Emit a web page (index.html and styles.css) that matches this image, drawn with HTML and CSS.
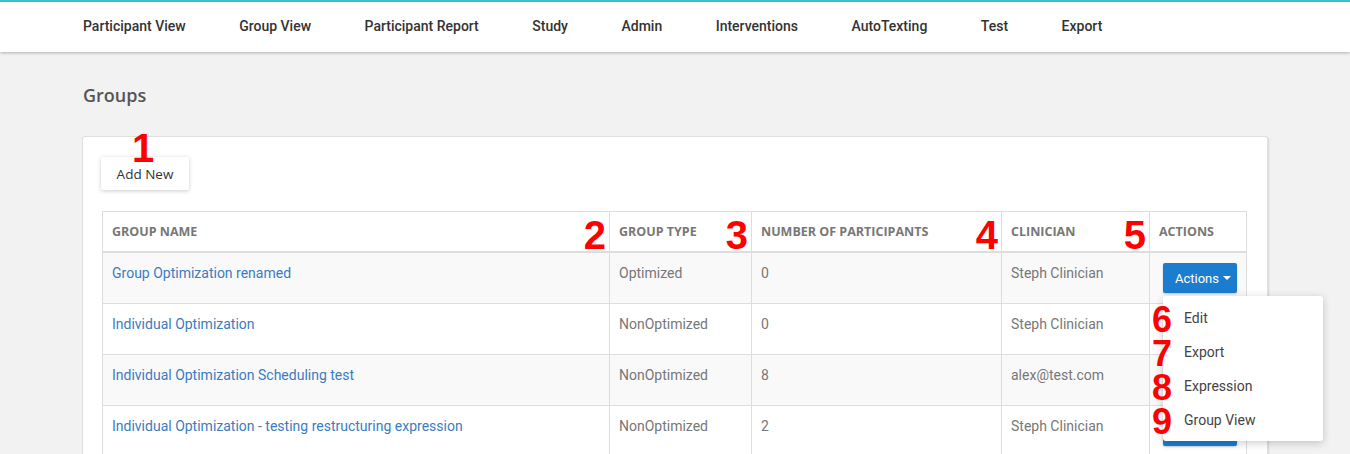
FILE: index.html
```html
<!DOCTYPE html>
<html lang="en">
<head>
<meta charset="utf-8">
<title>Groups</title>
<link rel="stylesheet" href="styles.css">
</head>
<body>
<header class="topbar">
  <nav class="container nav">
    <a class="nav-link" href="#">Participant View</a>
    <a class="nav-link" href="#">Group View</a>
    <a class="nav-link" href="#">Participant Report</a>
    <a class="nav-link" href="#">Study</a>
    <a class="nav-link" href="#">Admin</a>
    <a class="nav-link" href="#">Interventions</a>
    <a class="nav-link" href="#">AutoTexting</a>
    <a class="nav-link" href="#">Test</a>
    <a class="nav-link" href="#">Export</a>
  </nav>
</header>

<main class="container">
  <h2 class="page-title">Groups</h2>
  <section class="card">
    <div class="toolbar">
      <button class="btn-add">Add New</button>
      <span class="mark mark-1">1</span>
    </div>
    <table class="groups">
      <colgroup>
        <col class="c-name"><col class="c-type"><col class="c-num"><col class="c-clin"><col class="c-act">
      </colgroup>
      <thead>
        <tr>
          <th>Group Name<span class="mark mark-h">2</span></th>
          <th>Group Type<span class="mark mark-h">3</span></th>
          <th>Number of Participants<span class="mark mark-h">4</span></th>
          <th>Clinician<span class="mark mark-h">5</span></th>
          <th>Actions</th>
        </tr>
      </thead>
      <tbody>
        <tr class="odd">
          <td><a href="#">Group Optimization renamed</a></td>
          <td>Optimized</td>
          <td>0</td>
          <td>Steph Clinician</td>
          <td class="act">
            <div class="dropdown">
              <button class="btn-actions">Actions<span class="caret"></span></button>
              <ul class="menu">
                <li><span class="mark mark-m">6</span>Edit</li>
                <li><span class="mark mark-m">7</span>Export</li>
                <li><span class="mark mark-m">8</span>Expression</li>
                <li><span class="mark mark-m">9</span>Group View</li>
              </ul>
            </div>
          </td>
        </tr>
        <tr>
          <td><a href="#">Individual Optimization</a></td>
          <td>NonOptimized</td>
          <td>0</td>
          <td>Steph Clinician</td>
          <td class="act"><button class="btn-actions">Actions<span class="caret"></span></button></td>
        </tr>
        <tr class="odd">
          <td><a href="#">Individual Optimization Scheduling test</a></td>
          <td>NonOptimized</td>
          <td>8</td>
          <td>alex@test.com</td>
          <td class="act"><button class="btn-actions">Actions<span class="caret"></span></button></td>
        </tr>
        <tr>
          <td><a href="#">Individual Optimization - testing restructuring expression</a></td>
          <td>NonOptimized</td>
          <td>2</td>
          <td>Steph Clinician</td>
          <td class="act"><button class="btn-actions">Actions<span class="caret"></span></button></td>
        </tr>
      </tbody>
    </table>
  </section>
</main>
</body>
</html>
```

FILE: styles.css
```css
html, body {
  margin: 0;
  padding: 0;
  overflow: hidden;
}
body {
  background: #f2f2f2;
  font-family: Roboto, "Liberation Sans", sans-serif;
  font-size: 14px;
  color: #333;
  height: 454px;
}
.container {
  width: 1186px;
  margin: 0 auto;
  box-sizing: border-box;
}
.topbar {
  background: #fff;
  border-top: 2px solid #35c3c8;
  height: 50px;
  box-shadow: 0 1px 3px rgba(0, 0, 0, 0.28);
}
.nav {
  display: flex;
  align-items: center;
  height: 48px;
  gap: 53.5px;
  padding-left: 1px;
}
.nav-link {
  font-family: Roboto, sans-serif;
  font-weight: 500;
  font-size: 14px;
  color: #333;
  text-decoration: none;
}
.page-title {
  font-family: "Open Sans", sans-serif;
  font-weight: 600;
  font-size: 18px;
  color: #555;
  margin: 0;
  padding: 31px 0 0 1px;
  line-height: 24px;
  height: 53px;
}
.card {
  background: #fff;
  border: 1px solid #e0e0e0;
  border-radius: 3px;
  box-shadow: 1px 1px 2px rgba(0, 0, 0, 0.12);
  padding: 20px 20px 20px 19px;
}
.toolbar {
  position: relative;
  height: 33px;
  margin-bottom: 21px;
}
.btn-add {
  font-family: "Open Sans", sans-serif;
  font-size: 13.5px;
  color: #333;
  background: #fff;
  border: none;
  border-radius: 2px;
  height: 33px;
  width: 88px;
  margin-left: -1px;
  box-shadow: 0 1px 4px rgba(0, 0, 0, 0.2);
  padding: 0;
}
.mark {
  position: absolute;
  font-family: "Liberation Sans", Arial, sans-serif;
  font-weight: 700;
  color: #ff0000;
  font-size: 40px;
  line-height: 40px;
}
.mark-1 {
  left: 30px;
  top: -29px;
}
.groups {
  width: 1144px;
  border-collapse: collapse;
  table-layout: fixed;
  border: 1px solid #ddd;
}
.c-name { width: 507px; }
.c-type { width: 142px; }
.c-num { width: 250px; }
.c-clin { width: 148px; }
.c-act { width: 97px; }
.groups th {
  position: relative;
  font-family: "Open Sans", sans-serif;
  font-weight: 700;
  font-size: 12.5px;
  text-transform: uppercase;
  color: #777;
  text-align: left;
  padding: 10px 9px 9px;
  line-height: 20px;
  border: 1px solid #ddd;
  border-bottom: 2px solid #ddd;
}
.mark-h {
  right: 3px;
  top: 3px;
}
.groups td {
  font-family: Roboto, sans-serif;
  font-size: 14px;
  color: #777;
  vertical-align: top;
  line-height: 20px;
  padding: 10px 9px;
  border: 1px solid #ddd;
}
.groups tr.odd td {
  background: #f9f9f9;
}
.groups td a {
  color: #3b7cc0;
  text-decoration: none;
}
.groups td.act {
  padding-left: 13px;
}
.dropdown {
  position: relative;
}
.btn-actions {
  display: inline-flex;
  align-items: center;
  font-family: Roboto, sans-serif;
  font-size: 13px;
  color: #fff;
  background: #1b7dd0;
  border: none;
  border-radius: 2px;
  height: 30px;
  width: 74px;
  padding: 0 0 0 12px;
  box-shadow: 0 1px 2px rgba(0, 0, 0, 0.2);
}
.caret {
  display: inline-block;
  width: 0;
  height: 0;
  margin-left: 4px;
  border-top: 4px solid #fff;
  border-left: 4px solid transparent;
  border-right: 4px solid transparent;
}
.menu {
  position: absolute;
  top: 33px;
  left: 0;
  width: 160px;
  margin: 0;
  padding: 5px 0 4px;
  list-style: none;
  background: #fff;
  border-radius: 3px;
  box-shadow: 0 2px 8px rgba(0, 0, 0, 0.2);
  z-index: 5;
}
.menu li {
  position: relative;
  height: 34px;
  line-height: 34px;
  padding-left: 21px;
  font-family: Roboto, sans-serif;
  font-size: 14px;
  color: #444;
}
.mark-m {
  font-size: 36px;
  line-height: 34px;
  left: -11px;
  top: 2px;
}
```
